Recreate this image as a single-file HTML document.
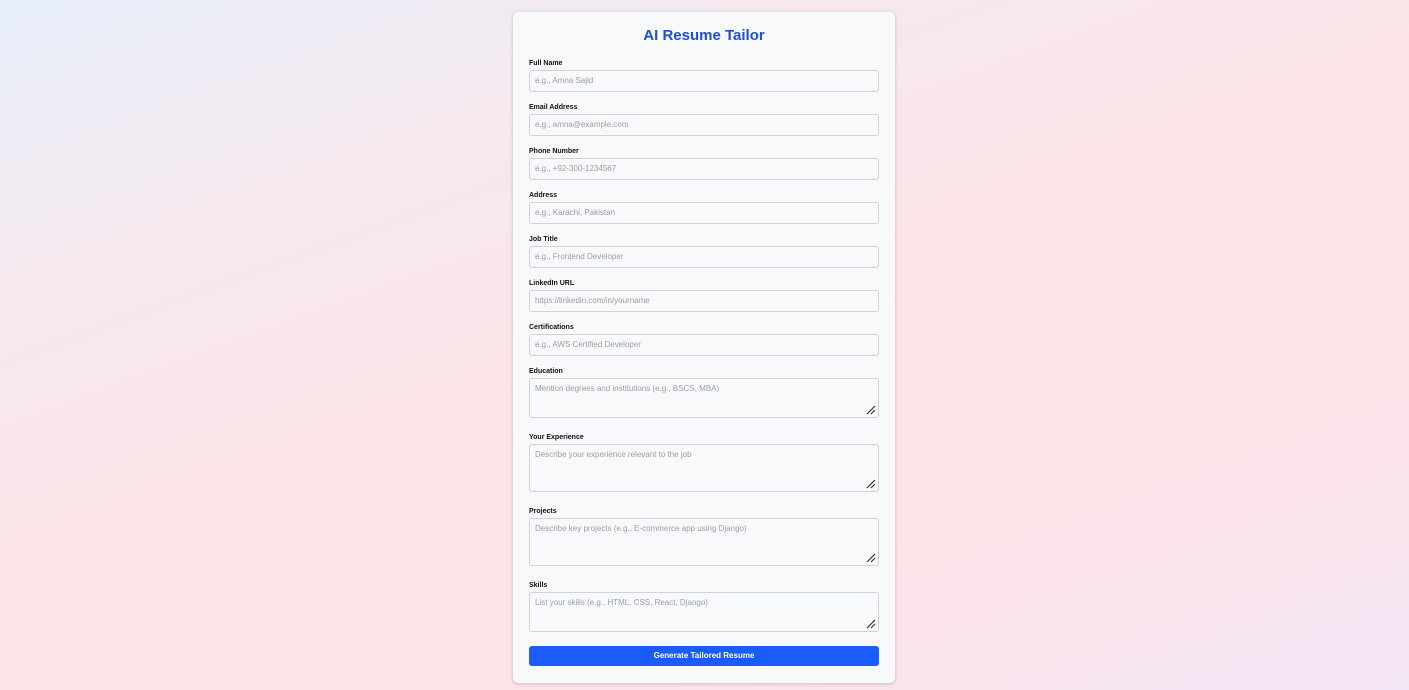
<!DOCTYPE html>
<html><head><style>
html,body{margin:0;padding:0;width:1409px;height:690px;overflow:hidden}
body{background:linear-gradient(160deg,#e7effa 0%,#f6e8ee 25%,#fde4e6 55%,#fbe4ea 80%,#f3e6f6 100%);font-family:"Liberation Sans",sans-serif;position:relative}
.card{position:absolute;left:513px;top:12px;width:382px;height:671px;background:#f8f9fb;border-radius:6px;box-shadow:0 1px 4px rgba(0,0,0,.18)}
h1{position:absolute;left:0;width:100%;top:14px;margin:0;text-align:center;font-size:15px;font-weight:bold;color:#1d4fd8;line-height:20px}
.l{position:absolute;left:16px;font-size:7px;font-weight:bold;color:#111;line-height:9px;margin-top:1px}
.i{position:absolute;left:16px;width:348px;height:20px;border:1px solid #cfd3da;border-radius:3px;background:#f8f9fb;font-size:8px;color:#9aa0a8;box-sizing:content-box}
.i span{position:absolute;left:5px;top:5px;line-height:9px}
.g{position:absolute;right:2px;bottom:2px;width:10px;height:10px}
.b{position:absolute;left:16px;top:634px;width:350px;height:20px;background:#1a5cff;border-radius:3px;color:#fff;font-size:8px;font-weight:bold;text-align:center;line-height:20px}
</style></head><body>
<div class="card">
<h1>AI Resume Tailor</h1>
<div class="l" style="top:46px">Full Name</div>
<div class="i" style="top:58px"><span>e.g., Amna Sajid</span></div>
<div class="l" style="top:90px">Email Address</div>
<div class="i" style="top:102px"><span>e.g., amna@example.com</span></div>
<div class="l" style="top:134px">Phone Number</div>
<div class="i" style="top:146px"><span>e.g., +92-300-1234567</span></div>
<div class="l" style="top:178px">Address</div>
<div class="i" style="top:190px"><span>e.g., Karachi, Pakistan</span></div>
<div class="l" style="top:222px">Job Title</div>
<div class="i" style="top:234px"><span>e.g., Frontend Developer</span></div>
<div class="l" style="top:266px">LinkedIn URL</div>
<div class="i" style="top:278px"><span>https://linkedin.com/in/yourname</span></div>
<div class="l" style="top:310px">Certifications</div>
<div class="i" style="top:322px"><span>e.g., AWS Certified Developer</span></div>
<div class="l" style="top:354px">Education</div>
<div class="i" style="top:366px;height:38px"><span>Mention degrees and institutions (e.g., BSCS, MBA)</span><svg class="g" viewBox="0 0 10 10"><path d="M1 9L9 1M5 9L9 5" stroke="#333" stroke-width="1.2"/></svg></div>
<div class="l" style="top:420px">Your Experience</div>
<div class="i" style="top:432px;height:46px"><span>Describe your experience relevant to the job</span><svg class="g" viewBox="0 0 10 10"><path d="M1 9L9 1M5 9L9 5" stroke="#333" stroke-width="1.2"/></svg></div>
<div class="l" style="top:494px">Projects</div>
<div class="i" style="top:506px;height:46px"><span>Describe key projects (e.g., E-commerce app using Django)</span><svg class="g" viewBox="0 0 10 10"><path d="M1 9L9 1M5 9L9 5" stroke="#333" stroke-width="1.2"/></svg></div>
<div class="l" style="top:568px">Skills</div>
<div class="i" style="top:580px;height:38px"><span>List your skills (e.g., HTML, CSS, React, Django)</span><svg class="g" viewBox="0 0 10 10"><path d="M1 9L9 1M5 9L9 5" stroke="#333" stroke-width="1.2"/></svg></div>
<div class="b">Generate Tailored Resume</div>
</div>
</body></html>
